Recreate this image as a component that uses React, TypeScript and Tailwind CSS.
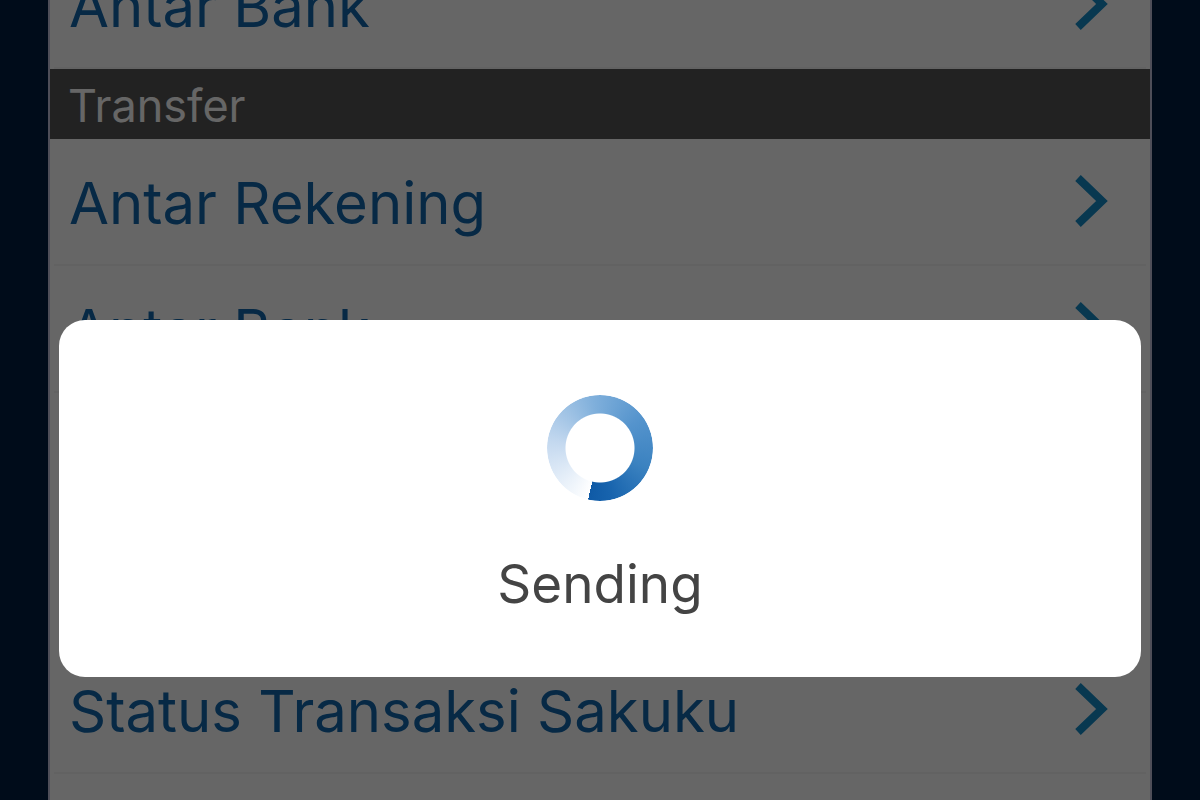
type MenuRowProps = { label: string };

function MenuRow({ label }: MenuRowProps) {
  return (
    <li className="mx-1 h-[127px] border-b-2 border-[#f6f6f6]">
      <a href="#" className="flex h-full items-center justify-between pr-[37px] pl-[15px] text-[#1268ad]">
        <span className="pt-0.5 text-[58px] leading-[64px] whitespace-nowrap">{label}</span>
        <svg
          className="h-14 w-9 shrink-0 text-[#158cc8]"
          viewBox="0 0 36 56"
          fill="none"
          stroke="currentColor"
          strokeWidth="8"
          aria-hidden="true"
        >
          <path d="M5 4 29 27 5 50" />
        </svg>
      </a>
    </li>
  );
}

function Spinner() {
  return (
    <div
      role="progressbar"
      aria-label="Sending"
      className="size-[106px] rounded-full bg-[conic-gradient(from_193deg,#ffffff_0deg,#e3edf8_40deg,#c3d8ef_85deg,#7fafdb_160deg,#5594cd_220deg,#3b82c0_280deg,#1763ad_335deg,#0f5aa6_360deg)] [mask-image:radial-gradient(circle,transparent_34px,black_35px)]"
    />
  );
}

export default function App() {
  return (
    <div className="relative flex h-screen flex-col overflow-hidden bg-[#002041] px-12 font-['Inter',sans-serif]">
      <main className="flex flex-1 flex-col border-x-2 border-[#c4c4dc] bg-white">
        <ul className="-mt-[58px]">
          <MenuRow label="Antar Bank" />
        </ul>
        <h2 className="flex h-[70px] shrink-0 items-center bg-[#555555] pt-1 pl-[18px] text-[45px] leading-[48px] text-white">
          Transfer
        </h2>
        <ul>
          <MenuRow label="Antar Rekening" />
          <MenuRow label="Antar Bank" />
          <li className="h-[254px]" aria-hidden="true" />
          <MenuRow label="Status Transaksi Sakuku" />
        </ul>
      </main>
      <div className="absolute inset-0 bg-black/60 px-[59px] pt-80">
        <div
          role="dialog"
          aria-modal="true"
          aria-labelledby="status"
          className="flex h-[357px] flex-col items-center rounded-[26px] bg-white pt-[75px]"
        >
          <Spinner />
          <p id="status" className="mt-[51px] text-[53px] leading-[64px] text-[#444444]">
            Sending
          </p>
        </div>
      </div>
    </div>
  );
}
